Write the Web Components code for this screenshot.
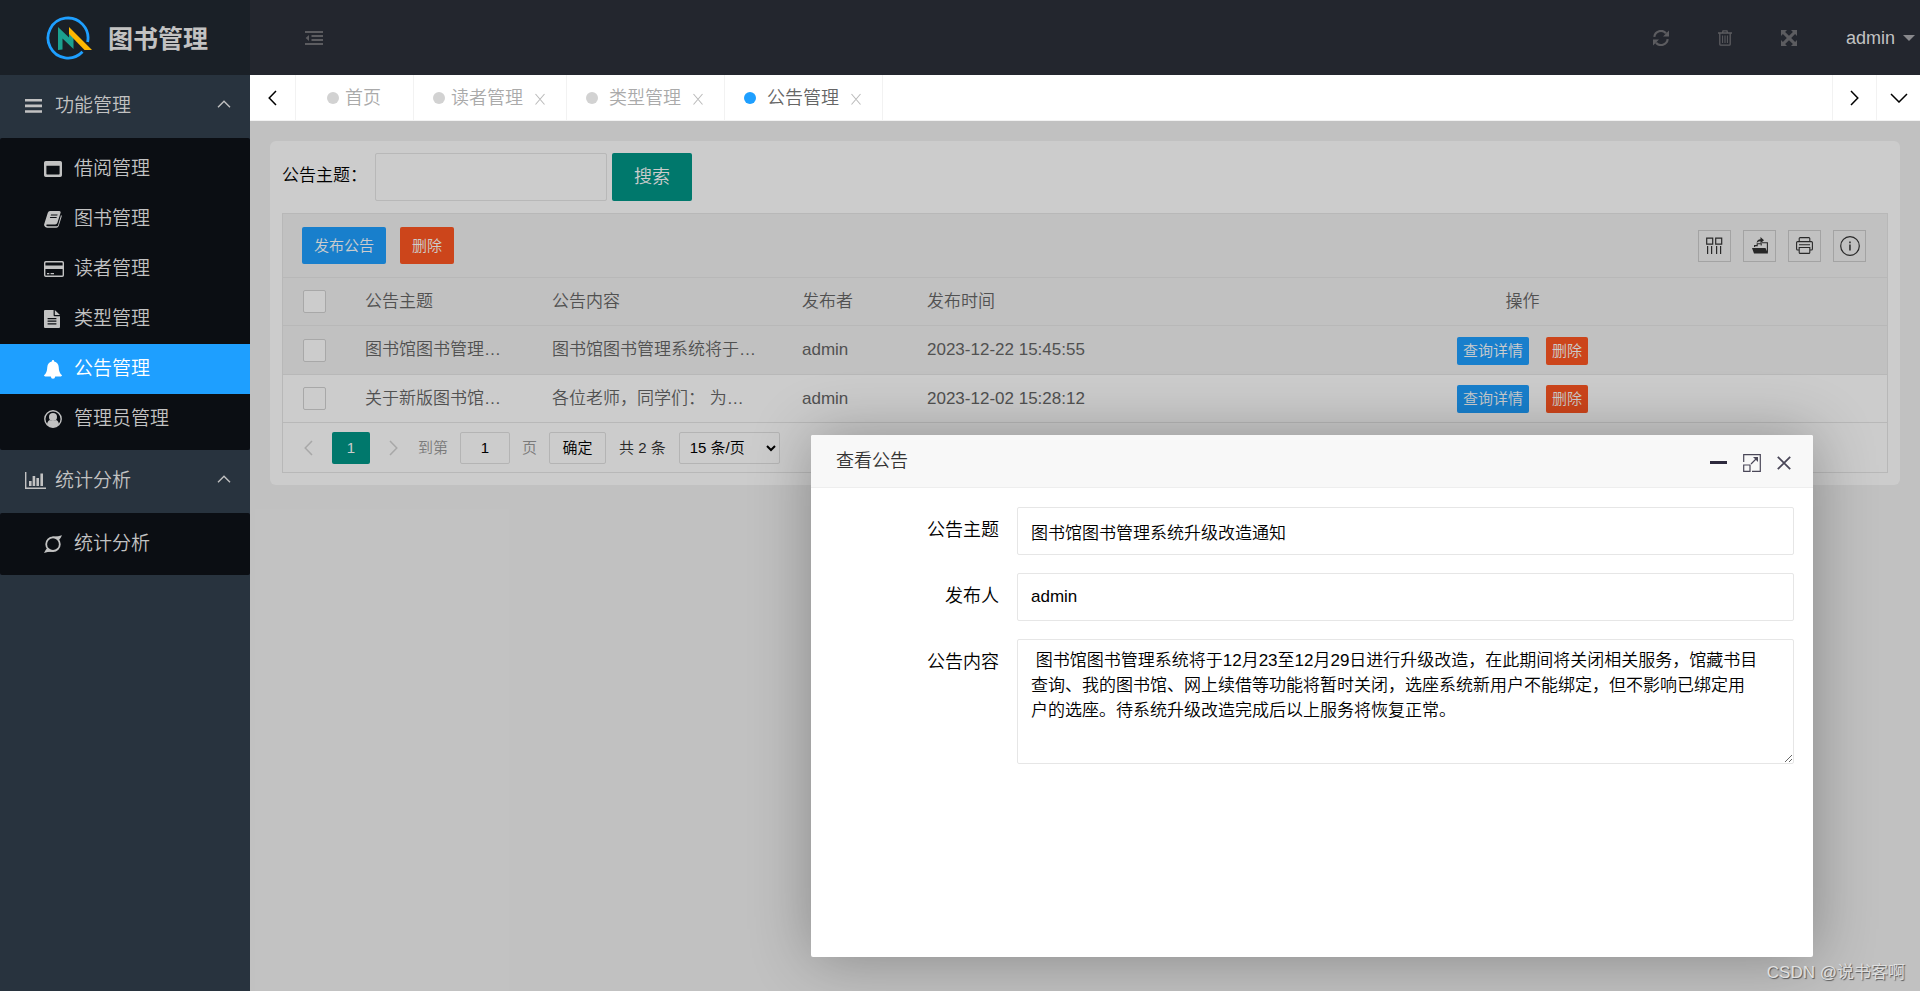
<!DOCTYPE html>
<html lang="zh-CN">
<head>
<meta charset="utf-8">
<title>图书管理</title>
<style>
  html, body { height: 100%; margin: 0; }
  body { font-family: "Liberation Sans", "Noto Sans CJK SC", sans-serif; font-size: 17px; font-weight: 350; line-height: 24px; color: #000; background: #f2f2f2; }
</style>
</head>
<body>
<lib-app></lib-app>
<script>
const ICONS = {
  menu: ['0 0 17 14', '<path d="M0 0h17v2.6H0zM0 5.6h17v2.6H0zM0 11.2h17v2.6H0z"/>'],
  chart: ['0 0 21 17', '<path d="M0 0h1.4v15.6H21V17H0zM4 9h2.6v5H4zM7.6 4h2.6v10H7.6zM11.4 6h2.6v8h-2.6zM15.4 1.6H18V14h-2.6z"/>'],
  window: ['0 0 18 16', '<path fill-rule="evenodd" d="M1.8 0h14.4Q18 0 18 1.8v12.4q0 1.8-1.8 1.8H1.8Q0 16 0 14.2V1.8Q0 0 1.8 0zM2.4 4.8v8q0 .6.6.6h12q.6 0 .6-.6v-8z"/>'],
  book: ['0 0 18 17', '<path fill-rule="evenodd" d="M6 0h9.4q1.6.2 1.2 1.8l-3.200 10q-.6 1.700-2.200 1.700H3q-1 .2-.7 1.100.4.6 1.500.6h9.200q.8 0 1.100-1L17 4q1 .5.6 1.800l-2.900 9.200q-.6 1.800-2.300 1.800H3Q.8 16.600.2 14.600q-.3-1 .2-2.200L3.800 1.800Q4.400.2 6 0zM7 3.500l-.3 1h6.600l.3-1zM6.200 6l-.3 1h6.600l.3-1z"/>'],
  card: ['0 0 20 16', '<path fill-rule="evenodd" d="M1.800 0h16.400Q20 0 20 1.800v12.400q0 1.800-1.800 1.800H1.800Q0 16 0 14.200V1.800Q0 0 1.800 0zM1.400 2v2.400h17.200V2q0-.6-.6-.6H2q-.6 0-.6.600zM1.400 8v6q0 .6.6.6h16q.6 0 .6-.6V8zM3 12h2.300v1.300H3zM6.600 12H10v1.300H6.600z"/>'],
  file: ['0 0 16 18', '<path fill-rule="evenodd" d="M1 0h8.600v5.200q0 1 1 1H16V17q0 1-1 1H1q-1 0-1-1V1q0-1 1-1zM3.600 8v1.200h8.800V8zM3.600 10.600v1.200h8.800v-1.200zM3.600 13.200v1.200h8.800v-1.200z"/><path d="M10.800 0v5H16z"/>'],
  bell: ['0 0 18 19', '<path d="M9 0q1.200 0 1.200 1.400Q14.400 2.500 14.700 7q.2 6 3.300 8.300 0 1.100-1.200 1.100h-5.600Q11 18.800 9 18.800T6.800 16.400H1.200Q0 16.400 0 15.300 3.100 13 3.300 7 3.600 2.500 7.800 1.400 7.800 0 9 0z"/>'],
  user: ['0 0 18 18', '<circle cx="9" cy="9" r="8.2" fill="none" stroke="currentColor" stroke-width="1.400"/><circle cx="9" cy="7" r="4"/><path d="M3 14.500Q3.500 10.600 6 10q3 2 6 0 2.500.6 3 4.500Q12.500 17.300 9 17.300T3 14.500z"/>'],
  orbit: ['0 0 18 18', '<circle cx="9" cy="9.200" r="6.800" fill="none" stroke="currentColor" stroke-width="1.800"/><path d="M8 1.600Q14 1.800 18 .2q-1 2.600-3.200 5zM10 16.700Q4 16.400 0 17.900q1-2.600 3.200-5z"/>'],
  up: ['0 0 14 8', '<path d="M1 7.200 7 1.200l6 6" fill="none" stroke="currentColor" stroke-width="1.400"/>'],
  down: ['0 0 18 10', '<path d="M1 1l8 8 8-8" fill="none" stroke="currentColor" stroke-width="1.500"/>'],
  left: ['0 0 9 16', '<path d="M8 1 1.200 8 8 15" fill="none" stroke="currentColor" stroke-width="1.500"/>'],
  right: ['0 0 9 16', '<path d="M1 1l6.800 7L1 15" fill="none" stroke="currentColor" stroke-width="1.500"/>'],
  cross: ['0 0 12 12', '<path d="M1.500 1l9 10.500M10.500 1l-9 10.500" fill="none" stroke="currentColor" stroke-width="1.100"/>'],
  close: ['0 0 14 14', '<path d="M.8.8l12.400 12.400M13.200.8.8 13.200" fill="none" stroke="currentColor" stroke-width="1.800"/>'],
  minus: ['0 0 17 3', '<path d="M0 0h17v3H0z"/>'],
  enlarge: ['0 0 18 18', '<path d="M.7 8V.7h16.600v16.600H9" fill="none" stroke="currentColor" stroke-width="1.200"/><path d="M.7 11h6.300v6.300H.7zM8 10l6-6" fill="none" stroke="currentColor" stroke-width="1.200"/><path d="M10 3h5v5z"/>'],
  collapse: ['0 0 18 14', '<path d="M0 0h18v2H0zM6.500 4H18v2H6.500zM6.500 8H18v2H6.500zM0 12h18v2H0zM4 4v6L.6 7z"/>'],
  refresh: ['0 0 16 16', '<path d="M1.300 6.800A6.700 6.700 0 0 1 13 3.300M14.700 9.200A6.700 6.700 0 0 1 3 12.700" fill="none" stroke="currentColor" stroke-width="2.200"/><path d="M16 .6v6h-6zM0 15.400v-6h6z"/>'],
  trash: ['0 0 14 16', '<path d="M0 3h14M4.500 3 5 .8h4L9.500 3M1.800 3v11.200q0 1 1 1h8.400q1 0 1-1V3" fill="none" stroke="currentColor" stroke-width="1.300"/><path d="M4.600 5.500v7.500M7 5.500v7.500M9.400 5.500v7.500" fill="none" stroke="currentColor"/>'],
  expand: ['0 0 16 16', '<path d="M0 0h6L4.100 1.900 8 5.800l3.900-3.900L10 0h6v6l-1.900-1.900L10.200 8l3.900 3.900L16 10v6h-6l1.900-1.900L8 10.200l-3.900 3.900L6 16H0v-6l1.900 1.900L5.800 8 1.900 4.100 0 6z"/>'],
  caret: ['0 0 12 6', '<path d="M0 0h12L6 6z"/>'],
  columns: ['0 0 17 18', '<path d="M.7 1.200h6v6h-6zM9.700 1.200h6v6h-6z" fill="none" stroke="currentColor" stroke-width="1.200"/><path d="M1.600 9v8M5.600 9v8M10.600 9v8M14.600 9v8" fill="none" stroke="currentColor" stroke-width="1.200"/>'],
  export: ['0 0 16 17', '<path d="M0 11h13.500L16 16.500H2zM4.700 6Q5 2.300 8.500 2.300V0L12 3.300 8.500 6.300V4.200Q6 4 4.700 6z"/><path d="M2.600 10V8.600h2.600V6.800h4v1.800M9.500 5.800h5.900v10" fill="none" stroke="currentColor" stroke-width="1.100"/>'],
  print: ['0 0 17 17', '<path d="M3.200 4.500V1.600q0-1 1-1h8.600q1 0 1 1v2.900M3.200 13H1.600q-1 0-1-1V5.600q0-1 1-1h13.800q1 0 1 1V12q0 1-1 1h-1.600M3.200 10.500h10.600v4.900q0 1-1 1H4.200q-1 0-1-1zM3 7.800h11" fill="none" stroke="currentColor" stroke-width="1.100"/>'],
  info: ['0 0 20 20', '<circle cx="10" cy="10" r="9.300" fill="none" stroke="currentColor" stroke-width="1.200"/><path d="M9.200 5.600h1.500v1.600H9.200zM9.200 8.500h1.500v6H9.200z"/>'],
  logo: ['0 0 47 45', '<path d="M41.600 26A20 20 0 1 0 36.500 35.800" fill="none" stroke="#1e9fff" stroke-width="2.800"/><path d="M12 11l11 10.500V17l4.500 4.500V33l-11-10.500V33.500L12 34z" fill="#1ba08f"/><path d="M23 11l23 23h-7.500L23 18z" fill="#ffb800"/>']
};

function define(name, css, html) {
  customElements.define(name, class extends HTMLElement {
    connectedCallback() {
      if (this.shadowRoot) return;
      const root = this.attachShadow({ mode: 'open' });
      const t = document.createElement('template');
      t.innerHTML = '<style>*{box-sizing:border-box}' + css + '</style>' + (typeof html === 'function' ? html(this) : html);
      root.append(t.content.cloneNode(true));
    }
  });
}

define('ui-icon', ':host{display:inline-flex;flex:none}svg{display:block;fill:currentColor}', el => {
  const [box, body] = ICONS[el.getAttribute('name')];
  const [, , w, h] = box.split(' ');
  return `<svg viewBox="${box}" width="${w}" height="${h}" aria-hidden="true">${body}</svg>`;
});

define('side-item', `
  :host{display:block}
  a{display:flex;align-items:center;height:50px;padding-left:44px;color:#c2c2c2;text-decoration:none;font-size:19px}
  ui-icon{width:30px}
  :host([active]) a{background:#1e9fff;color:#fff}`,
  el => `<a href="#"><ui-icon name="${el.getAttribute('icon')}"></ui-icon><slot></slot></a>`);

define('side-group', `
  :host{display:block}
  button{display:flex;align-items:center;width:100%;height:63px;border:0;padding:0 19px 2px 25px;background:none;color:#c2c2c2;font:inherit;font-size:19px}
  .lead{width:30px}
  .arrow{padding-bottom:3px}
  span{flex:1;text-align:left}
  div{background:#0b0e13;border-radius:2px;padding:6px 0}`,
  el => `<button type="button"><ui-icon class="lead" name="${el.getAttribute('icon')}"></ui-icon><span>${el.getAttribute('label')}</span><ui-icon class="arrow" name="up"></ui-icon></button><div><slot></slot></div>`);

define('lib-sidebar', `
  :host{display:block;background:#28333e}
  header{display:flex;align-items:center;gap:15px;height:75px;padding:2px 0 0 46px;background:#1a2027}
  h1{margin:0;font-size:25px;font-weight:700;color:#c2c2c2;line-height:36px}`,
  `<header><ui-icon name="logo"></ui-icon><h1>图书管理</h1></header>
  <nav>
  <side-group icon="menu" label="功能管理">
    <side-item icon="window">借阅管理</side-item><side-item icon="book">图书管理</side-item>
    <side-item icon="card">读者管理</side-item><side-item icon="file">类型管理</side-item>
    <side-item icon="bell" active>公告管理</side-item><side-item icon="user">管理员管理</side-item>
  </side-group>
  <side-group icon="chart" label="统计分析"><side-item icon="orbit">统计分析</side-item></side-group>
  </nav>`);

define('lib-topbar', `
  :host{display:flex;align-items:center;height:75px;background:#23262e;padding:0 5px 0 55px;color:#5c5c60}
  button{display:flex;align-items:center;justify-content:center;border:0;padding:0;background:none;color:inherit;font:inherit;width:64px;height:60px}
  .toggle{width:18px;margin-right:auto}
  .me{width:auto;gap:8px;margin-left:25px;color:#c2c2c2;font-size:18px}
  .me ui-icon{color:#88888c}`,
  `<button type="button" class="toggle" aria-label="收起菜单"><ui-icon name="collapse"></ui-icon></button>
  <button type="button" aria-label="刷新"><ui-icon name="refresh"></ui-icon></button>
  <button type="button" aria-label="清理"><ui-icon name="trash"></ui-icon></button>
  <button type="button" aria-label="全屏"><ui-icon name="expand"></ui-icon></button>
  <button type="button" class="me">admin<ui-icon name="caret"></ui-icon></button>`);

define('page-tab', `
  :host{display:flex;align-items:center;padding:0 20px 0 19px;border-right:1px solid #f2f2f2;color:#aaa}
  :host([home]){padding:0 32px 0 31px}
  i{width:12px;height:12px;border-radius:50%;background:#d2d2d2;margin-right:6px}
  :host([spaced]) i{margin-right:11px}
  :host([active]){color:#666}:host([active]) i{background:#1e9fff}
  a{color:inherit;text-decoration:none;font-size:18px}
  button{display:flex;border:0;padding:2px 0 0;margin-left:11px;background:none;color:#bbb}`,
  el => `<i></i><a href="#"><slot></slot></a>${el.hasAttribute('home') ? '' : '<button type="button" aria-label="关闭"><ui-icon name="cross"></ui-icon></button>'}`);

define('lib-tabs', `
  :host{display:flex;height:46px;background:#fff;border-bottom:1px solid #f2f2f2}
  button{display:flex;align-items:center;justify-content:center;width:44px;border:0;border-left:1px solid #f2f2f2;padding:0;background:none;color:#000}
  .prev{width:46px;border-left:0;border-right:1px solid #f2f2f2}
  .fill{flex:1}`,
  `<button type="button" class="prev" aria-label="向左"><ui-icon name="left"></ui-icon></button>
  <page-tab home>首页</page-tab><page-tab>读者管理</page-tab><page-tab spaced>类型管理</page-tab><page-tab spaced active>公告管理</page-tab>
  <span class="fill"></span>
  <button type="button" aria-label="向右"><ui-icon name="right"></ui-icon></button>
  <button type="button" aria-label="更多"><ui-icon name="down"></ui-icon></button>`);

define('ui-button', `
  :host{display:inline-flex}
  button{border:0;border-radius:2px;padding:0 12px;height:37px;background:#1e9fff;color:#fff;font:inherit;font-size:15px;white-space:nowrap}
  :host([danger]) button{background:#ff5722}
  :host([primary]) button{background:#009688;height:48px;padding:0 22px;font-size:18px}
  :host([small]) button{height:28px;padding:0 6px}`,
  '<button type="button"><slot></slot></button>');

define('search-bar', `
  :host{display:flex;align-items:center}
  label{width:92px;padding-bottom:2px}
  input{width:232px;height:48px;margin:0 5px 0 1px;border:1px solid #e6e6e6;border-radius:2px;background:#fff;padding:0 12px;font:inherit}`,
  `<label for="q">公告主题：</label><input id="q" type="text"><ui-button primary>搜索</ui-button>`);

define('list-pager', `
  :host{display:flex;align-items:center;height:49px;padding:0 21px;font-size:15px;color:#333}
  button,input,select{height:32px;border:1px solid #e2e2e2;border-radius:2px;background:#fff;font:inherit;color:#000;padding:0}
  .nav{display:flex;align-items:center;border:0;background:none;color:#d2d2d2}
  .on{display:flex;align-items:center;justify-content:center;width:38px;height:32px;margin:0 19px;background:#009688;border-radius:2px;color:#fff;text-decoration:none}
  label{display:flex;align-items:center;gap:12px;color:#999;margin-left:20px}
  input{width:50px;text-align:center}
  .go{width:57px;margin:0 13px 0 12px}
  select{width:101px;margin-left:13px;padding-left:6px}`,
  `<button class="nav" type="button" aria-label="上一页"><ui-icon name="left"></ui-icon></button><a class="on" href="#">1</a>
  <button class="nav" type="button" aria-label="下一页"><ui-icon name="right"></ui-icon></button>
  <label>到第<input type="text" value="1">页</label><button class="go" type="button">确定</button><span>共 2 条</span>
  <select aria-label="每页条数"><option>15 条/页</option></select>`);

define('notice-table', `
  :host{display:block;border:1px solid #e6e6e6;color:#666}
  .bar{display:flex;align-items:center;gap:14px;height:64px;padding:0 21px 0 19px;background:#f2f2f2;border-bottom:1px solid #e6e6e6}
  .tools{display:flex;gap:12px;margin-left:auto}
  .tools button{display:flex;align-items:center;justify-content:center;width:33px;height:32px;padding:0;border:1px solid #ccc;background:none;color:#333}
  table{width:100%;table-layout:fixed;border-collapse:separate;border-spacing:0}
  th,td{height:49px;padding:0 19px;border-bottom:1px solid #e6e6e6;text-align:left;font-weight:inherit;white-space:nowrap;overflow:hidden}
  th:first-child,td:first-child{padding-left:20px}
  thead th,.alt td{background:#f2f2f2}
  thead th,.last td{height:48px}
  input{appearance:none;display:block;width:23px;height:23px;margin:0;border:1px solid #d2d2d2;border-radius:2px;background:#fff}
  th:last-child,td:last-child{text-align:center}
  .ops{display:flex;justify-content:center;gap:17px;padding-top:1px}
  .c0{width:63px}.c1{width:187px}.c2,.c4{width:250px}.c3{width:125px}`,
  `<div class="bar"><ui-button>发布公告</ui-button><ui-button danger>删除</ui-button>
  <div class="tools"><button type="button" aria-label="筛选列"><ui-icon name="columns"></ui-icon></button><button type="button" aria-label="导出"><ui-icon name="export"></ui-icon></button><button type="button" aria-label="打印"><ui-icon name="print"></ui-icon></button><button type="button" aria-label="提示"><ui-icon name="info"></ui-icon></button></div></div>
  <table><colgroup><col class="c0"><col class="c1"><col class="c2"><col class="c3"><col class="c4"><col></colgroup>
  <thead><tr><th><input type="checkbox" aria-label="全选"></th><th>公告主题</th><th>公告内容</th><th>发布者</th><th>发布时间</th><th>操作</th></tr></thead>
  <tbody>
  <tr class="alt"><td><input type="checkbox" aria-label="选择"></td><td>图书馆图书管理…</td><td>图书馆图书管理系统将于…</td><td>admin</td><td>2023-12-22 15:45:55</td><td><div class="ops"><ui-button small>查询详情</ui-button><ui-button small danger>删除</ui-button></div></td></tr>
  <tr class="last"><td><input type="checkbox" aria-label="选择"></td><td>关于新版图书馆…</td><td>各位老师，同学们： 为…</td><td>admin</td><td>2023-12-02 15:28:12</td><td><div class="ops"><ui-button small>查询详情</ui-button><ui-button small danger>删除</ui-button></div></td></tr>
  </tbody></table>
  <list-pager></list-pager>`);

define('notice-dialog', `
  :host{display:block;background:#fff;border-radius:2px;box-shadow:1px 1px 62px rgba(0,0,0,.3)}
  header{display:flex;align-items:center;height:53px;padding:0 22px 0 25px;background:#f8f8f8;border-bottom:1px solid #eee;color:#333;border-radius:2px 2px 0 0}
  h2{flex:1;margin:0;font-size:18px;font-weight:inherit}
  header button{display:flex;align-items:center;border:0;padding:3px 0 0;margin-left:16px;background:none;color:#4a4758}
  header .min{color:#2d2a3d}
  form{display:grid;grid-template-columns:188px 1fr;column-gap:18px;row-gap:18px;padding:19px 19px 0 0}
  label{text-align:right;padding-top:11px;font-size:18px}
  input,textarea{width:100%;height:48px;border:1px solid #e6e6e6;border-radius:2px;background:#fff;padding:0 13px;font:inherit;color:#000}
  textarea{display:block;height:125px;padding:8px 33px 8px 13px;line-height:25px;resize:vertical}`,
  `<header><h2>查看公告</h2>
  <button type="button" class="min" aria-label="最小化"><ui-icon name="minus"></ui-icon></button><button type="button" aria-label="最大化"><ui-icon name="enlarge"></ui-icon></button><button type="button" aria-label="关闭"><ui-icon name="close"></ui-icon></button></header>
  <form><label for="t">公告主题</label><input id="t" type="text" value="图书馆图书管理系统升级改造通知">
  <label for="p">发布人</label><input id="p" type="text" value="admin">
  <label for="c">公告内容</label><textarea id="c"> 图书馆图书管理系统将于12月23至12月29日进行升级改造，在此期间将关闭相关服务，馆藏书目查询、我的图书馆、网上续借等功能将暂时关闭，选座系统新用户不能绑定，但不影响已绑定用户的选座。待系统升级改造完成后以上服务将恢复正常。</textarea></form>`);

define('lib-app', `
  :host{display:grid;grid-template-columns:250px minmax(0,1fr);min-height:100%}
  .right{display:flex;flex-direction:column}
  main{position:relative;flex:1;padding:20px;background:#f2f2f2;overflow:hidden}
  .card{background:#fff;border-radius:6px;padding:12px}
  notice-table{margin-top:12px}
  .shade{position:absolute;inset:0;background:rgba(0,0,0,.2)}
  notice-dialog{position:absolute;left:561px;top:314px;width:60%;height:60%}
  .mark{position:absolute;right:15px;bottom:6px;color:#e0e0e0;font-size:17px;text-shadow:1px 1px 1px #555}`,
  `<lib-sidebar></lib-sidebar>
  <div class="right"><lib-topbar></lib-topbar><lib-tabs></lib-tabs>
  <main><div class="card"><search-bar></search-bar><notice-table></notice-table></div>
  <div class="shade"></div><notice-dialog></notice-dialog><span class="mark">CSDN @说书客啊</span></main></div>`);
</script>
</body>
</html>
